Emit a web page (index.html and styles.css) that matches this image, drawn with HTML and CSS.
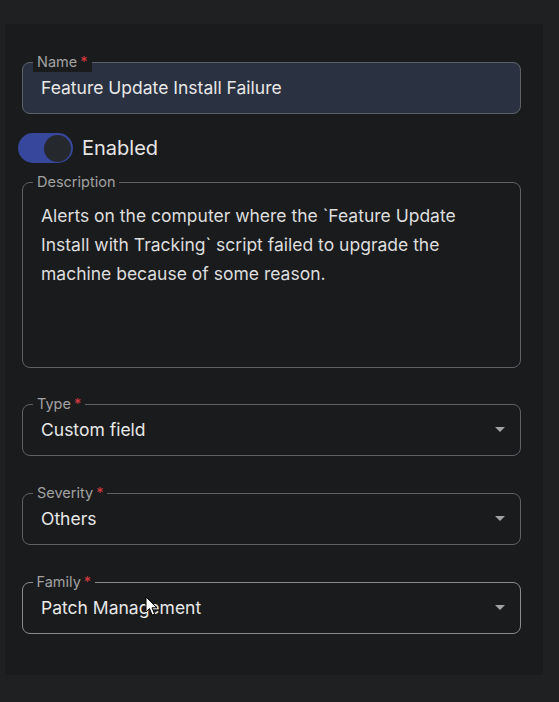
FILE: index.html
```html
<!DOCTYPE html>
<html lang="en">
<head>
<meta charset="utf-8">
<title>Alert form</title>
<link rel="stylesheet" href="styles.css">
</head>
<body>
<div class="panel">
  <fieldset class="field field-filled field-name">
    <legend class="label">Name<span class="req">*</span></legend>
    <div class="value">Feature Update Install Failure</div>
  </fieldset>

  <div class="toggle-row">
    <span class="switch"><span class="knob"></span></span>
    <span class="toggle-text">Enabled</span>
  </div>

  <fieldset class="field field-desc">
    <legend class="label">Description</legend>
    <div class="desc-text">Alerts on the computer where the `Feature Update Install with Tracking` script failed to upgrade the machine because of some reason.</div>
  </fieldset>

  <fieldset class="field field-select field-type">
    <legend class="label">Type<span class="req">*</span></legend>
    <div class="value select-value"><span>Custom field</span><span class="caret"></span></div>
  </fieldset>

  <fieldset class="field field-select field-sev">
    <legend class="label">Severity<span class="req">*</span></legend>
    <div class="value select-value"><span>Others</span><span class="caret"></span></div>
  </fieldset>

  <fieldset class="field field-select field-hover field-fam">
    <legend class="label">Family<span class="req">*</span></legend>
    <div class="value select-value"><span>Patch Management</span><span class="caret"></span></div>
  </fieldset>
</div>

<svg class="cursor" width="14" height="21" viewBox="0 0 14 21" aria-hidden="true">
  <path d="M1 1 L1 16 L4.5 12.6 L7.2 19 L9.6 18 L7 11.8 L12 11.8 Z" fill="#ffffff" stroke="#000000" stroke-width="1" stroke-linejoin="round"/>
</svg>
</body>
</html>
```

FILE: styles.css
```css
html, body {
  margin: 0;
  padding: 0;
  background: #1f2022;
  font-family: "Inter", "Noto Sans", "Liberation Sans", sans-serif;
  color: #e4e4e4;
}

body {
  width: 559px;
  height: 702px;
  overflow: hidden;
  position: relative;
}

.panel {
  margin: 24px 0 0 5px;
  width: 538px;
  height: 651px;
  box-sizing: border-box;
  padding: 28px 22px 0 17px;
  background: #1a1b1d;
  display: flex;
  flex-direction: column;
}

.field {
  margin: 0;
  padding: 0;
  min-width: 0;
  border: 1px solid #5d6065;
  border-radius: 8px;
}

.label {
  margin-left: 10px;
  padding: 0 4px;
  font-size: 14.5px;
  line-height: 20px;
  color: #a2a2a2;
  background: #1a1b1d;
}

.req {
  color: #d6393f;
  margin-left: 3px;
}

.field-filled {
  background: #2a3140;
}

.value {
  height: 31px;
  line-height: 31px;
  padding: 0 15px 10px 18px;
  font-size: 17.5px;
  color: #e8e8e8;
}

.select-value {
  display: flex;
  justify-content: space-between;
  align-items: center;
}

.caret {
  width: 0;
  height: 0;
  border-left: 5px solid transparent;
  border-right: 5px solid transparent;
  border-top: 5px solid #a3a3a3;
}

.toggle-row {
  display: flex;
  align-items: center;
  gap: 9px;
  margin: 19px 0 0 -4px;
  height: 30px;
}

.switch {
  width: 55px;
  height: 30px;
  border-radius: 15px;
  background: #37479b;
  display: flex;
  align-items: center;
  justify-content: flex-end;
  padding: 0 2px;
  box-sizing: border-box;
}

.knob {
  width: 27px;
  height: 27px;
  border-radius: 50%;
  background: #25282d;
}

.toggle-text {
  font-size: 20px;
  color: #e6e6e6;
}

.field-desc {
  margin-top: 9px;
}

.desc-text {
  height: 175px;
  box-sizing: border-box;
  padding: 9px 18px 0 18px;
  font-size: 17.5px;
  line-height: 29px;
  color: #dedede;
}

.field-type {
  margin-top: 26px;
}

.field-sev,
.field-fam {
  margin-top: 27px;
}

.field-hover {
  border: 1.5px solid #8b8b8b;
}

.field-hover .label {
  margin-left: 9.5px;
}

.cursor {
  position: absolute;
  left: 145px;
  top: 596px;
}
```
